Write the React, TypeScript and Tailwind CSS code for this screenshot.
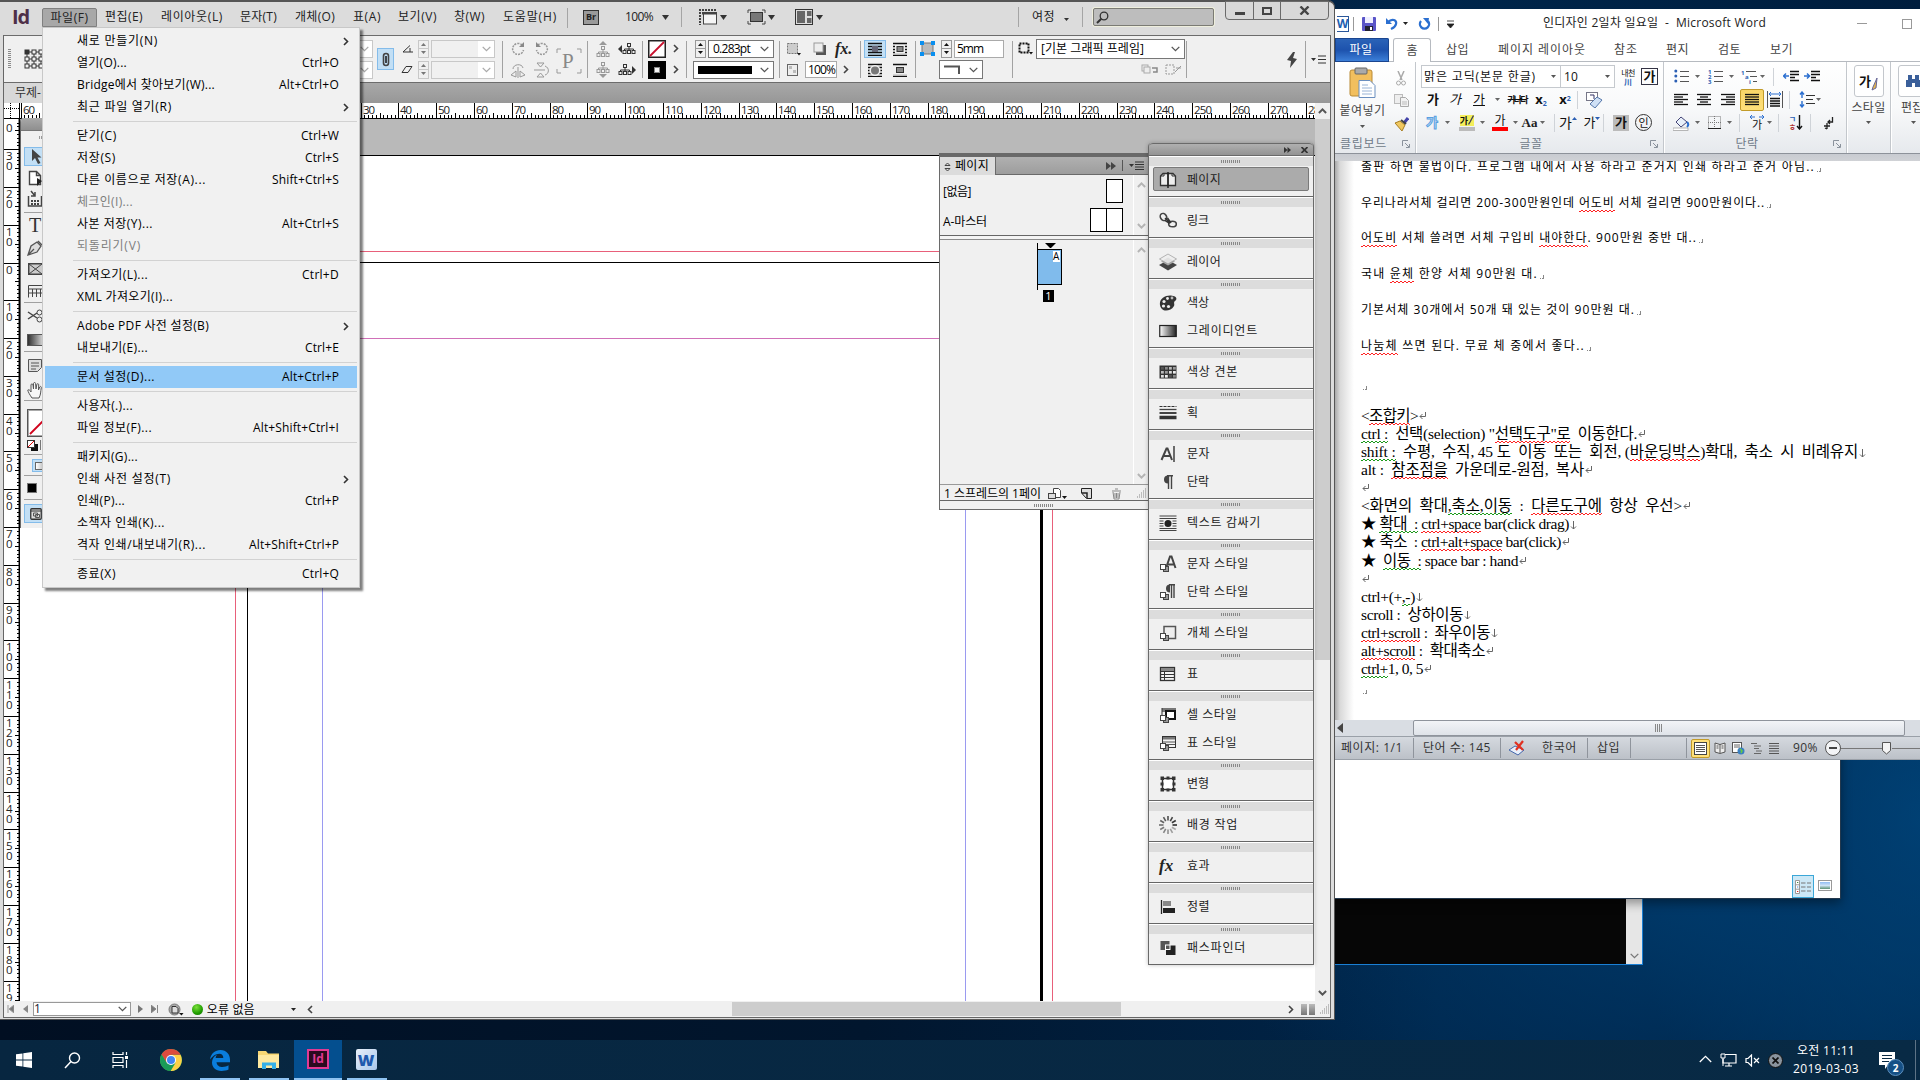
import React, { useLayoutEffect, useRef, useState } from "react";

/* Text whose tracking is adjusted so that it takes exactly `w` pixels. */
function Fit({ w, className = "", children }: { w: number; className?: string; children: React.ReactNode }) {
  const ref = useRef<HTMLSpanElement>(null);
  const [ls, setLs] = useState(0);
  useLayoutEffect(() => {
    const el = ref.current;
    if (!el) return;
    const n = (el.textContent || "").length || 1;
    setLs((w - el.getBoundingClientRect().width) / n);
  }, [w]);
  return (
    <span ref={ref} className={"inline-block shrink-0 whitespace-pre " + className} style={{ letterSpacing: ls }}>
      {children}
    </span>
  );
}

function Svg({ w, h, className = "", children }: { w: number; h: number; className?: string; children: React.ReactNode }) {
  return (
    <svg width={w} height={h} viewBox={`0 0 ${w} ${h}`} fill="none" className={"shrink-0 " + className}>
      {children}
    </svg>
  );
}

/* Centred fixed-size cell of a toolbar. */
function C({ className = "", children }: { className?: string; children?: React.ReactNode }) {
  return <div className={"flex shrink-0 items-center justify-center " + className}>{children}</div>;
}

const Down = ({ c = "#333", className = "" }: { c?: string; className?: string }) => (
  <Svg w={7} h={5} className={className}><path d="M0 0h7L3.500 5z" fill={c} /></Svg>
);
const DownS = ({ c = "#555" }: { c?: string }) => (
  <Svg w={5} h={3}><path d="M0 0h5L2.500 3z" fill={c} /></Svg>
);
const ChevD = ({ c = "#555" }: { c?: string }) => (
  <Svg w={9} h={6}><path d="M.7.9L4.500 4.700L8.300.9" stroke={c} strokeWidth="1.300" /></Svg>
);
const ChevR = ({ c = "#444" }: { c?: string }) => (
  <Svg w={6} h={9}><path d="M1 1l3.500 3.500L1 8" stroke={c} strokeWidth="1.600" /></Svg>
);
const ChevU = ({ c = "#b5b5b5" }: { c?: string }) => (
  <Svg w={9} h={6}><path d="M.9 5L4.500 1.400L8.100 5" stroke={c} strokeWidth="2" /></Svg>
);
const ChevDB = ({ c = "#b5b5b5" }: { c?: string }) => (
  <Svg w={9} h={6}><path d="M.9 1L4.500 4.600L8.100 1" stroke={c} strokeWidth="2" /></Svg>
);

/* ------------------------------------------------------------------ */
/* File menu                                                           */
/* ------------------------------------------------------------------ */
type MI = { t: string; w: number; k?: string; kw?: number; sub?: boolean; off?: boolean; sel?: boolean } | null;
const MENU: MI[] = [
  { t: "새로 만들기(N)", w: 81, sub: true },
  { t: "열기(O)...", w: 50, k: "Ctrl+O", kw: 37 },
  { t: "Bridge에서 찾아보기(W)...", w: 138, k: "Alt+Ctrl+O", kw: 60 },
  { t: "최근 파일 열기(R)", w: 95, sub: true },
  null,
  { t: "닫기(C)", w: 40, k: "Ctrl+W", kw: 38 },
  { t: "저장(S)", w: 39, k: "Ctrl+S", kw: 34 },
  { t: "다른 이름으로 저장(A)...", w: 129, k: "Shift+Ctrl+S", kw: 67 },
  { t: "체크인(I)...", w: 56, off: true },
  { t: "사본 저장(Y)...", w: 76, k: "Alt+Ctrl+S", kw: 57 },
  { t: "되돌리기(V)", w: 64, off: true },
  null,
  { t: "가져오기(L)...", w: 71, k: "Ctrl+D", kw: 37 },
  { t: "XML 가져오기(I)...", w: 96 },
  null,
  { t: "Adobe PDF 사전 설정(B)", w: 132, sub: true },
  { t: "내보내기(E)...", w: 71, k: "Ctrl+E", kw: 34 },
  null,
  { t: "문서 설정(D)...", w: 78, k: "Alt+Ctrl+P", kw: 57, sel: true },
  null,
  { t: "사용자(.)...", w: 56 },
  { t: "파일 정보(F)...", w: 75, k: "Alt+Shift+Ctrl+I", kw: 86 },
  null,
  { t: "패키지(G)...", w: 61 },
  { t: "인쇄 사전 설정(T)", w: 94, sub: true },
  { t: "인쇄(P)...", w: 48, k: "Ctrl+P", kw: 34 },
  { t: "소책자 인쇄(K)...", w: 88 },
  { t: "격자 인쇄/내보내기(R)...", w: 129, k: "Alt+Shift+Ctrl+P", kw: 90 },
  null,
  { t: "종료(X)", w: 39, k: "Ctrl+Q", kw: 37 },
];

function FileMenu() {
  return (
    <div className="absolute left-[42px] top-[27px] z-30 w-[318px] border border-[#c8c8c8] bg-[#f1f1f1] px-[2px] py-[2px] text-[12px] text-black shadow-[3px_3px_2px_rgba(0,0,0,0.5)]">
      {MENU.map((m, i) =>
        m === null ? (
          <div key={i} className="flex h-[7px] items-center pl-[28px]">
            <div className="h-px w-full bg-[#d2d2d2]" />
          </div>
        ) : (
          <div key={i} className={"flex h-[22px] items-center justify-between pl-[32px] leading-[22px] " + (m.sel ? "bg-[#91c9f7]" : "") + (m.off ? " text-[#7d7d7d]" : "")}>
            <Fit w={m.w}>{m.t}</Fit>
            {m.k && <Fit w={m.kw!} className="mr-[18px]">{m.k}</Fit>}
            {m.sub && <span className="mr-[8px]"><ChevR c="#333" /></span>}
          </div>
        )
      )}
    </div>
  );
}

/* ------------------------------------------------------------------ */
/* Application bar                                                     */
/* ------------------------------------------------------------------ */
const Sep = ({ className = "" }: { className?: string }) => <div className={"h-[20px] w-px shrink-0 bg-[#a5a5a5] " + className} />;

function AppBar() {
  return (
    <div className="flex h-[33px] shrink-0 items-start pl-[12px] text-[12px] leading-[18px] text-[#222]">
      <span className="mt-[4px] w-[30px] text-[20px] leading-[22px] font-bold tracking-[-1px] text-[#4e2f48]">Id</span>
      <div className="mt-[6px] flex h-[19px] w-[55px] justify-center rounded-t-[2px] border border-[#808080] bg-[#a8a8a8]">
        <Fit w={38} className="leading-[17px]">파일(F)</Fit>
      </div>
      <div className="mt-[6px] flex w-[471px]">
        <Fit w={38} className="ml-[8px]">편집(E)</Fit>
        <Fit w={62} className="ml-[18px]">레이아웃(L)</Fit>
        <Fit w={37} className="ml-[17px]">문자(T)</Fit>
        <Fit w={40} className="ml-[18px]">개체(O)</Fit>
        <Fit w={28} className="ml-[18px]">표(A)</Fit>
        <Fit w={39} className="ml-[17px]">보기(V)</Fit>
        <Fit w={31} className="ml-[17px]">창(W)</Fit>
        <Fit w={54} className="ml-[18px]">도움말(H)</Fit>
        <Sep className="ml-[10px]" />
      </div>
      <div className="mt-[6px] flex h-[18px] w-[450px] items-center">
        <div className="ml-[15px] flex h-[15px] w-[16px] items-center justify-center border border-[#333] bg-[#9a9a9a] text-[9px] font-bold text-[#222]">Br</div>
        <Fit w={28} className="ml-[26px]">100%</Fit>
        <Down className="ml-[9px]" />
        <Sep className="ml-[12px]" />
        <Svg w={19} h={16} className="ml-[17px]">
          <rect x="4.500" y="4.500" width="13" height="10.500" fill="#f5f5f5" stroke="#444" />
          <path d="M0 1h18M1 0v16" stroke="#444" strokeWidth="2" strokeDasharray="2 1" />
          <rect x="3" y="3" width="15" height="2.500" fill="#444" />
        </Svg>
        <Down className="ml-[2px]" />
        <Svg w={19} h={16} className="ml-[20px]">
          <path d="M1 4V1h3M15 1h3v3M1 12v3h3M15 15h3v-3" stroke="#444" />
          <rect x="3.500" y="3.500" width="12" height="9" fill="#777" stroke="#333" />
        </Svg>
        <Down className="ml-[2px]" />
        <Svg w={19} h={16} className="ml-[20px]">
          <rect x=".5" y=".5" width="17" height="15" fill="#ddd" stroke="#333" />
          <rect x="2" y="2" width="8" height="12" fill="#666" />
          <rect x="12" y="2" width="4.500" height="5" fill="#666" />
          <rect x="12" y="9" width="4.500" height="5" fill="#666" />
        </Svg>
        <Down className="ml-[2px]" />
      </div>
      <div className="mt-[6px] flex h-[18px] items-center">
        <Sep />
        <Fit w={23} className="ml-[13px]">여정</Fit>
        <span className="ml-[9px] mt-[4px]"><DownS c="#333" /></span>
        <Sep className="ml-[13px]" />
        <div className="ml-[10px] flex h-[18px] w-[121px] items-center rounded-[2px] border border-[#7b7b74] bg-[#bdbdbd] pl-[2px] shadow-[0_0_0_1px_#eeeedd]">
          <Svg w={13} h={13}><circle cx="8" cy="5" r="3.800" stroke="#333" strokeWidth="1.300" /><path d="M5.300 7.700L1 12" stroke="#333" strokeWidth="2" /></Svg>
        </div>
      </div>
      <div className="ml-[11px] -mt-[1px] flex h-[19px] w-[104px] rounded-b-[4px] border border-[#6a6a6a] bg-[#d8d8d8]">
        <C className="w-[28px] border-r border-[#6a6a6a]"><div className="mt-[5px] h-[3px] w-[10px] bg-[#444]" /></C>
        <C className="w-[27px] border-r border-[#6a6a6a]"><div className="h-[8px] w-[10px] border-[2px] border-[#444]" /></C>
        <C className="w-[47px]"><Svg w={11} h={9}><path d="M1.500.5l8 8M9.500.5l-8 8" stroke="#444" strokeWidth="2.400" /></Svg></C>
      </div>
    </div>
  );
}

/* ------------------------------------------------------------------ */
/* Control strip                                                       */
/* ------------------------------------------------------------------ */
const Bar = ({ className = "" }: { className?: string }) => <div className={"h-[37px] w-px shrink-0 bg-[#a2a2a2] " + className} />;
function Col({ className = "", children }: { className?: string; children: React.ReactNode }) {
  return <div className={"flex h-[40px] shrink-0 flex-col justify-between " + className}>{children}</div>;
}
function Row({ children, className = "" }: { children: React.ReactNode; className?: string }) {
  return <div className={"flex h-[19px] shrink-0 items-center " + className}>{children}</div>;
}
function Spin({ dim = false }: { dim?: boolean }) {
  return (
    <div className={"flex h-[18px] w-[11px] shrink-0 flex-col border " + (dim ? "border-[#c8c8c8]" : "border-[#999]")}>
      <C className={"h-[8px] border-b " + (dim ? "border-[#c8c8c8]" : "border-[#999]")}><Svg w={5} h={3}><path d="M0 3h5L2.500 0z" fill={dim ? "#777" : "#111"} /></Svg></C>
      <C className="h-[8px]"><DownS c={dim ? "#777" : "#111"} /></C>
    </div>
  );
}
function Dim() {
  return (
    <div className="flex h-[18px] w-[64px] shrink-0 border border-[#c8c8c8] bg-[#f0f0f0]">
      <C className="ml-auto h-full w-[16px] bg-white"><ChevD c="#aaa" /></C>
    </div>
  );
}
const Rot = ({ flip = false }: { flip?: boolean }) => (
  <Svg w={16} h={16} className={flip ? "-scale-x-100" : ""}>
    <path d="M12 4A5.500 5.500 0 1 0 13.500 9" stroke="#999" strokeWidth="1.500" strokeDasharray="2 1" /><path d="M14 1v5H9z" fill="#888" />
  </Svg>
);
const Tree = ({ dir, dim }: { dir: string; dim?: boolean }) => {
  const c = dim ? "#999" : "#333";
  return (
    <Svg w={18} h={16}>
      {dir === "u" && <path d="M9 0l4 4H5z" fill={c} />}
      {dir === "d" && <path d="M9 16l4-4H5z" fill={c} />}
      {dir === "l" && <path d="M0 8l4-4v8z" fill={c} />}
      {dir === "r" && <path d="M18 8l-4-4v8z" fill={c} />}
      <g transform={dir === "u" ? "translate(0 3)" : dir === "d" ? "translate(0 -2)" : dir === "l" ? "translate(2 0)" : "translate(-2 0)"}>
        <rect x="7.500" y="2.500" width="3" height="3" stroke={c} />
        <path d="M9 6v4M4.500 10V8h9v2" stroke={c} />
        <rect x="3" y="9.500" width="3" height="3" stroke={c} /><rect x="7.500" y="9.500" width="3" height="3" stroke={c} /><rect x="12" y="9.500" width="3" height="3" stroke={c} />
      </g>
    </Svg>
  );
};
const Wrap = ({ k }: { k: number }) => (
  <Svg w={16} h={14}>
    <path d="M1 1.500h14M1 4.500h14M1 7.500h14M1 10.500h14M1 13.500h14" stroke="#111" strokeWidth="1.300" />
    {k === 0 && <rect x="5" y="4" width="6" height="6" fill="#667" />}
    {k === 1 && <><rect x="3" y="3" width="10" height="8.500" fill="#f0f0f0" /><rect x="5" y="4.500" width="6" height="5" fill="#888" stroke="#333" /></>}
    {k === 2 && <><circle cx="8" cy="7.500" r="5.500" fill="#f0f0f0" /><circle cx="8" cy="7.500" r="4" fill="#777" /></>}
    {k === 3 && <><rect x="0" y="3" width="16" height="8.500" fill="#f0f0f0" /><rect x="4.500" y="4.500" width="7" height="5" fill="#888" stroke="#333" /></>}
  </Svg>
);

function ControlStrip() {
  return (
    <div className="flex h-[48px] shrink-0 items-start border-y border-[#6c6c6c] bg-[#f0f0f0] pt-[3px] text-[12px] leading-[17px] text-black">
      <div className="ml-[4px] mt-[10px] h-[20px] w-[3px] bg-[repeating-linear-gradient(#8a8a8a_0_1px,transparent_1px_2px)]" />
      <Svg w={20} h={20} className="ml-[13px] mt-[10px]">
        <path d="M3 3h14v14H3zM3 10h14M10 3v14" stroke="#333" />
        {[0, 1, 2].map((r) => [0, 1, 2].map((c) => (
          <rect key={r * 3 + c} x={1 + c * 7} y={1 + r * 7} width="4" height="4" fill={r + c === 0 ? "#333" : "#f0f0f0"} stroke="#333" />
        )))}
      </Svg>
      <Col className="ml-[265px]"><Row><Dim /></Row><Row><Dim /></Row></Col>
      <C className="ml-[4px] mt-[9px] h-[22px] w-[17px] border border-[#84bcea] bg-[#c2dff5]">
        <Svg w={8} h={15}><rect x="1.500" y="1.500" width="5" height="12" rx="2.500" stroke="#444" strokeWidth="1.600" /><path d="M4 4v7" stroke="#111" strokeWidth="1.500" /></Svg>
      </C>
      <Col className="ml-[3px] w-[98px]">
        <Row><C className="w-[20px]"><Svg w={11} h={9}><path d="M1 8L8 1.500M1 8h10M8 4v4" stroke="#333" /></Svg></C><span className="w-[1px]" /><Spin dim /><span className="w-[2px]" /><Dim /></Row>
        <Row><C className="w-[20px]"><Svg w={12} h={9}><path d="M1 7.500L5 1.500h6L7 7.500z" stroke="#333" /></Svg></C><span className="w-[1px]" /><Spin dim /><span className="w-[2px]" /><Dim /></Row>
      </Col>
      <Bar className="ml-[7px] mt-[2px]" />
      <Col className="ml-[5px]">
        <Row><C className="w-[20px]"><Rot /></C><C className="ml-[4px] w-[20px]"><Rot flip /></C></Row>
        <Row>
          <C className="w-[20px]"><Svg w={16} h={16}><path d="M1 13l5-4v6zM15 13l-5-4v6z M8 5v11M3 7C3 2 12 1 13 6" stroke="#999" /></Svg></C>
          <C className="ml-[4px] w-[20px]"><Svg w={16} h={16}><path d="M3 1h7L6.500 5zM3 15h7L6.500 11z M0 8h11M11 4c5 2 4 8 0 9" stroke="#999" /></Svg></C>
        </Row>
      </Col>
      <Svg w={26} h={26} className="ml-[4px] mt-[9px]">
        <path d="M1 5V1h4M21 1h4v4M1 21v4h4M21 25h4v-4" stroke="#999" />
        <text x="6" y="20" fontSize="21" fontFamily="Liberation Serif" fill="#888">P</text>
      </Svg>
      <Bar className="ml-[5px] mt-[2px]" />
      <Col className="ml-[6px]">
        <Row><Tree dir="u" dim /><span className="w-[6px]" /><Tree dir="l" /></Row>
        <Row><Tree dir="d" dim /><span className="w-[6px]" /><Tree dir="r" /></Row>
      </Col>
      <Bar className="ml-[6px] mt-[2px]" />
      <Col className="ml-[5px]">
        <Row><Svg w={18} h={18}><rect x=".75" y=".75" width="16.500" height="16.500" fill="#fff" stroke="#222" strokeWidth="1.500" /><path d="M2 16L16 2" stroke="#c8102e" strokeWidth="1.800" /></Svg><span className="w-[7px]" /><ChevR /></Row>
        <Row><Svg w={18} h={18}><rect width="18" height="18" fill="#000" /><rect x="6.500" y="6.500" width="5" height="5" fill="#f4f4f4" stroke="#888" /></Svg><span className="w-[7px]" /><ChevR /></Row>
      </Col>
      <Bar className="ml-[7px] mt-[2px]" />
      <Col className="ml-[6px] w-[81px]">
        <Row className="justify-end"><Spin /><div className="ml-[2px] flex h-[18px] w-[66px] items-center justify-between border border-[#777] bg-white pl-[4px] pr-[4px]"><Fit w={37}>0.283pt</Fit><ChevD /></div></Row>
        <Row><div className="flex h-[18px] w-[81px] items-center justify-between border border-[#777] bg-white pl-[4px] pr-[4px]"><div className="h-[8px] w-[54px] bg-black" /><ChevD /></div></Row>
      </Col>
      <Bar className="ml-[5px] mt-[2px]" />
      <Col className="ml-[4px] w-[74px]">
        <Row>
          <C className="w-[18px]"><Svg w={15} h={14}><rect x="1.500" y="1.500" width="10" height="10" fill="#ccc" stroke="#777" strokeDasharray="2 1" /><path d="M11 11h4l-2 2.500z" fill="#111" /></Svg></C>
          <C className="ml-[8px] w-[18px]"><Svg w={13} h={13}><rect x="3" y="3" width="10" height="10" fill="#555" /><rect x="1" y="1" width="9" height="9" fill="#eee" stroke="#999" /></Svg></C>
          <span className="ml-[7px] font-['Liberation_Serif'] text-[16px] font-bold italic text-[#222]">fx.</span>
        </Row>
        <Row>
          <C className="w-[16px]"><Svg w={11} h={12}><rect x=".5" y=".5" width="10" height="11" fill="#eee" stroke="#666" /><path d="M2 2h3v3H2zM6 6h3v3H6z" fill="#bbb" /></Svg></C>
          <div className="ml-[5px] flex h-[17px] w-[32px] items-center border border-[#aaa] bg-white pl-[2px]"><Fit w={27}>100%</Fit></div>
          <span className="ml-[6px]"><ChevR /></span>
        </Row>
      </Col>
      <Bar className="ml-[2px] mt-[2px]" />
      <Col className="ml-[3px]">
        <Row><C className="h-[18px] w-[22px] border border-[#84bcea] bg-[#c2dff5]"><Wrap k={0} /></C><C className="ml-[4px] w-[20px]"><Wrap k={1} /></C></Row>
        <Row><C className="w-[22px]"><Wrap k={2} /></C><C className="ml-[4px] w-[20px]"><Wrap k={3} /></C></Row>
      </Col>
      <Bar className="ml-[5px] mt-[2px]" />
      <Col className="ml-[4px] w-[86px]">
        <Row>
          <Svg w={15} h={15}><rect x="2" y="2" width="11" height="11" fill="#bbb" stroke="#777" /><path d="M0 0h4v4H0zM11 0h4v4h-4zM0 11h4v4H0zM11 11h4v4h-4z" fill="#0a8fef" /></Svg>
          <span className="w-[6px]" /><Spin />
          <div className="ml-[2px] flex h-[18px] w-[50px] items-center border border-[#aaa] bg-white pl-[2px]"><Fit w={26}>5mm</Fit></div>
        </Row>
        <Row className="pl-[19px]"><div className="flex h-[19px] w-[44px] items-center justify-between border border-[#777] bg-white px-[4px]"><Svg w={17} h={9}><path d="M0 1.500h15V9" stroke="#555" strokeWidth="2" /></Svg><ChevD /></div></Row>
      </Col>
      <Bar className="ml-[6px] mt-[2px]" />
      <Col className="ml-[5px] w-[167px]">
        <Row>
          <Svg w={15} h={13}><rect x="1.500" y="1.500" width="9" height="9" stroke="#111" strokeWidth="2" strokeDasharray="2 1" /><path d="M11 10h4l-2 2.500z" fill="#111" /></Svg>
          <div className="ml-[3px] flex h-[20px] w-[149px] shrink-0 items-center justify-between border border-[#777] bg-white px-[4px]"><Fit w={103}>[기본 그래픽 프레임]</Fit><ChevD /></div>
        </Row>
        <Row className="justify-end gap-[7px] pr-[3px]">
          <Svg w={17} h={11}><rect x="1" y="1" width="6" height="6" stroke="#aaa" /><rect x="3" y="3" width="6" height="6" fill="#eee" stroke="#aaa" /><path d="M11 4h5v4h-4" stroke="#888" strokeWidth="1.500" /></Svg>
          <Svg w={17} h={11}><rect x="1" y="1" width="8" height="9" stroke="#999" strokeDasharray="2 1" /><path d="M10 8l6-6M11 4h5" stroke="#999" /></Svg>
        </Row>
      </Col>
      <Bar className="ml-[1px] mt-[2px]" />
      <C className="ml-[94px] h-[41px] w-[22px]"><Svg w={12} h={16}><path d="M7 0L1 8l4 1-1 7 7-9-4-1 2-6z" fill="#444" /></Svg></C>
      <Bar className="ml-[2px] mt-[2px]" />
      <C className="ml-[5px] h-[40px] w-[15px]"><Svg w={15} h={9}><path d="M0 3h5L2.500 6zM7 .5h8v1H7zM7 4h8v1H7zM7 7.500h8v1H7z" fill="#333" /></Svg></C>
    </div>
  );
}

/* ------------------------------------------------------------------ */
/* Rulers                                                              */
/* ------------------------------------------------------------------ */
const MM = 3.7795;
function HRuler() {
  const ox = 227.3;
  const ticks: React.ReactNode[] = [];
  for (let m = -60; m <= 286; m++) {
    const x = Math.round(ox + m * MM) + 0.5;
    if (x < 0 || x > 1295) continue;
    ticks.push(<path key={m} d={`M${x} ${m % 10 === 0 ? 0 : m % 5 === 0 ? 10 : 12}V15`} stroke="#000" />);
    if (m % 10 === 0) ticks.push(<text key={"t" + m} x={x + 1.5} y="11" fontSize="11.500" fill="#222" textLength={String(Math.abs(m)).length * 6}>{Math.abs(m)}</text>);
  }
  return <Svg w={1295} h={16}><rect width="1295" height="16" fill="#fff" />{ticks}<path d="M0 15.500h1295" stroke="#000" /></Svg>;
}
function VRuler() {
  const oy = 143.5;
  const ticks: React.ReactNode[] = [];
  for (let m = -37; m <= 196; m++) {
    const y = Math.round(oy + m * MM) + 0.5;
    ticks.push(<path key={m} d={`M${m % 10 === 0 ? 0 : m % 5 === 0 ? 11 : 13} ${y}H16`} stroke="#000" />);
    if (m % 10 === 0)
      String(Math.abs(m)).split("").forEach((d, i) => ticks.push(<text key={"t" + m + i} x="2" y={y + 10.5 + i * 10} fontSize="11.500" fill="#222">{d}</text>));
  }
  return <Svg w={16} h={882}><rect width="16" height="882" fill="#fff" />{ticks}<text x="2" y="13" fontSize="11.500" fill="#222">0</text><path d="M15.300 0v882" stroke="#000" strokeWidth="1.500" /></Svg>;
}

/* ------------------------------------------------------------------ */
/* Tool box                                                            */
/* ------------------------------------------------------------------ */
const TSep = () => <div className="ml-[3px] h-px shrink-0 bg-[#a0a0a0]" />;
function Tool({ className = "", children }: { className?: string; children: React.ReactNode }) {
  return <div className={"ml-[3px] flex w-[30px] shrink-0 items-center pl-[3px] " + className}>{children}</div>;
}
function ToolBox() {
  return (
    <div className="absolute left-[0px] top-[-1px] flex h-[410px] w-[60px] flex-col overflow-hidden rounded-tl-[4px] border-l border-[#666] bg-[#f0f0f0]">
      <div className="h-[13px] shrink-0 border-b border-[#777] bg-gradient-to-b from-[#a9a9a9] to-[#8f8f8f]" />
      <div className="ml-[18px] mt-[5px] h-[3px] w-[20px] shrink-0 bg-[repeating-linear-gradient(90deg,#999_0_1px,transparent_1px_2px)]" />
      <Tool className="mt-[8px] h-[19px] border border-[#84bcea] bg-[#c2dff5] pl-[6px]"><Svg w={12} h={16}><path d="M1 0v12l3-3 3 6 2.500-1L6.500 8.500h4z" fill="#444" /></Svg></Tool>
      <Tool className="h-[23px]"><Svg w={16} h={16}><path d="M2.500 1.500h7l4 4v9h-11zM9.500 1.500v4h4" fill="#fff" stroke="#444" strokeWidth="1.400" /><path d="M10 8v8l5-5z" fill="#222" /></Svg></Tool>
      <Tool className="h-[23px] pb-[4px]"><Svg w={16} h={17}><path d="M1.500 6v10h13V6M4 1l4 5M8 2v4H4" stroke="#444" strokeWidth="1.500" /><path d="M4 11h9M4 14h9" stroke="#444" strokeDasharray="2 1" strokeWidth="2" /></Svg></Tool>
      <TSep />
      <Tool className="h-[25px]"><span className="ml-[2px] font-['Liberation_Serif'] text-[20px] leading-[25px] text-[#333]">T</span></Tool>
      <Tool className="h-[20px]"><Svg w={16} h={16}><path d="M1 15l3-9 6-4 4 4-4 6zM1 15l6-6M11 1l4 4" fill="#ddd" stroke="#555" strokeWidth="1.300" /></Svg></Tool>
      <Tool className="h-[22px] pl-[4px]"><Svg w={15} h={12}><rect x=".75" y=".75" width="14" height="10.500" fill="#ccc" stroke="#444" strokeWidth="1.500" /><path d="M1 1l13 10M14 1L1 11" stroke="#444" /></Svg></Tool>
      <Tool className="h-[22px] pl-[4px]"><Svg w={16} h={13}><path d="M.5.5h15v12M.5.500v12M.5 4h15M.5 8h15M4.500 4v8M8.500 4v8M12.500 4v8" stroke="#444" /></Svg></Tool>
      <TSep />
      <Tool className="h-[26px]"><Svg w={16} h={14}><path d="M1 3l9 6M1 10l9-6" stroke="#444" strokeWidth="1.500" /><circle cx="12.500" cy="3.500" r="2.500" stroke="#444" /><circle cx="12.500" cy="10.500" r="2.500" stroke="#444" /></Svg></Tool>
      <Tool className="h-[22px]"><div className="h-[12px] w-[20px] border border-[#555] bg-gradient-to-r from-[#333] to-white" /></Tool>
      <TSep />
      <Tool className="h-[28px]"><Svg w={16} h={16}><path d="M1.500 1.500h13v8l-4 4h-9zM4 5h8M4 8h8M4 11h5" fill="#ddd" stroke="#555" /></Svg></Tool>
      <Tool className="h-[20px] pl-[2px]"><Svg w={17} h={17}><path d="M5 16C3 13 1 10 .8 8c1-.8 2.200.2 3.200 2V3c0-1.500 1.800-1.500 2 0l.5 4V1.500c.2-1.300 2-1.300 2.100 0L9 7l.8-4.500c.3-1.200 1.900-1 1.900.2L11.500 8l1.200-3c.5-1 1.900-.5 1.600.6C13.500 10 14 12 12 16z" fill="#f7f7f7" stroke="#555" /></Svg></Tool>
      <TSep />
      <div className="ml-[6px] mt-[8px] flex h-[28px] w-[28px] shrink-0 border border-[#555] bg-white shadow-[inset_0_0_0_1px_#aaa]"><Svg w={26} h={26}><path d="M2 24L24 2" stroke="#d0021b" strokeWidth="1.800" /></Svg></div>
      <Tool className="h-[17px]"><Svg w={16} h={12}><rect x="4" y="4" width="7" height="7" fill="#111" /><rect x=".5" y=".5" width="7" height="7" fill="#fff" stroke="#333" /><path d="M1 7l6-6" stroke="#d00" /><path d="M13.500 0v10" stroke="#777" /></Svg></Tool>
      <TSep />
      <div className="ml-[11px] mt-[4px] flex h-[13px] w-[30px] shrink-0 items-center border border-[#84bcea] bg-[#c2dff5] pl-[2px]"><div className="h-[8px] w-[12px] border border-[#666] bg-gradient-to-r from-white to-[#aaa]" /></div>
      <div className="h-[3px] shrink-0" />
      <TSep />
      <Tool className="h-[23px]"><div className="h-[10px] w-[10px] border border-[#777] bg-black" /></Tool>
      <TSep />
      <Tool className="mt-[4px] h-[19px] border border-[#84bcea] bg-[#c2dff5] pl-[5px]"><Svg w={12} h={12}><rect x=".75" y=".75" width="10.500" height="10.500" rx="1" fill="#ddd" stroke="#333" strokeWidth="1.300" /><path d="M1 3h10" stroke="#333" /><path d="M3.500 5h4v3h-4zM5.500 6.500h4v3h-4z" stroke="#555" /></Svg></Tool>
    </div>
  );
}

/* ------------------------------------------------------------------ */
/* Pages panel                                                         */
/* ------------------------------------------------------------------ */
function PagesPanel() {
  return (
    <div className="absolute left-[919px] top-[34px] flex h-[357px] w-[210px] flex-col border-x border-b border-[#6a6a6a] border-t-[4px] border-t-[#696969] bg-[#f0f0f0] text-[12px] leading-[16px] text-black">
      <div className="flex h-[18px] shrink-0 bg-gradient-to-b from-[#b0b0b0] to-[#9c9c9c]">
        <div className="flex w-[56px] items-center border-r border-[#6a6a6a] bg-[#dcdcdc] pl-[4px]">
          <Svg w={7} h={10} className="mt-[2px]"><path d="M1 3.500l2.500-2.500L6 3.500zM1 6.500l2.500 2.500L6 6.500z" stroke="#444" /></Svg>
          <Fit w={34} className="ml-[4px] leading-[18px]">페이지</Fit>
        </div>
        <div className="flex flex-1 items-center justify-end border-b border-[#6a6a6a] pr-[4px]">
          <Svg w={10} h={8}><path d="M0 0l5 4-5 4zM5 0l5 4-5 4z" fill="#444" /></Svg>
          <div className="mx-[6px] h-[11px] w-px bg-[#555]" />
          <Svg w={15} h={9}><path d="M0 3h5L2.500 6zM6 .5h9v1H6zM6 3h9v1H6zM6 5.500h9v1H6zM6 8h9v1H6z" fill="#333" /></Svg>
        </div>
      </div>
      <div className="flex h-[60px] shrink-0">
        <div className="flex flex-1 flex-col">
          <div className="flex h-[31px] items-center justify-between pl-[3px] pr-[10px]"><Fit w={28} className="mt-[3px] leading-[18px]">[없음]</Fit><div className="h-[24px] w-[17px] border border-black bg-white" /></div>
          <div className="flex h-[28px] items-center justify-between pl-[3px] pr-[10px]"><Fit w={44} className="mt-[4px]">A-마스터</Fit><div className="flex h-[24px] w-[33px] border border-black bg-white"><div className="w-[16px] border-r border-black" /></div></div>
        </div>
        <div className="flex w-[15px] flex-col items-center justify-between border-l border-white py-[6px] pt-[7px]"><ChevU /><ChevDB /></div>
      </div>
      <div className="h-[5px] shrink-0 border-b border-t border-[#8a8a8a] border-t-[#666] bg-[#f4f4f4]" />
      <div className="flex h-[244px] shrink-0">
        <div className="flex flex-1 flex-col items-start pl-[97px] pt-[3px]">
          <div className="flex flex-col border-l border-black">
            <div className="flex h-[6px] w-[25px] justify-center"><Svg w={11} h={5}><path d="M0 0h11L6 5H5z" fill="#000" /></Svg></div>
            <div className="flex h-[36px] w-[24px] justify-end border border-l-0 border-black bg-[#80bbec]"><span className="mt-[1px] mr-[1px] h-[11px] w-[7px] bg-white text-[10px] leading-[11px]">A</span></div>
            <div className="h-[5px]" />
          </div>
          <div className="ml-[6px] flex h-[12px] w-[11px] items-center justify-center bg-black text-[11px] leading-[12px] text-white">1</div>
        </div>
        <div className="flex w-[15px] flex-col items-center justify-between border-l border-white pb-[5px] pt-[7px]"><ChevU /><ChevDB /></div>
      </div>
      <div className="flex h-[16px] shrink-0 items-center border-t border-[#999] pl-[4px]">
        <Fit w={97} className="mt-[2px] leading-[15px]">1 스프레드의 1페이</Fit>
        <Svg w={20} h={12} className="ml-[7px] mt-[2px]"><path d="M5.500.5h5l2 2v7h-7z" fill="#fff" stroke="#444" /><rect x=".5" y="5.500" width="7" height="5" fill="#ddd" stroke="#444" /><path d="M14 8h5l-2.500 3z" fill="#111" /></Svg>
        <Svg w={11} h={11} className="ml-[13px] mt-[2px]"><path d="M.5.5h10v10h-5L.5 5z" fill="#ddd" stroke="#222" /><path d="M1 5h5v5" stroke="#222" strokeWidth="1.500" /></Svg>
        <Svg w={11} h={12} className="ml-[19px] mt-[2px]"><path d="M1 3h9M4 1h3M2 4l1 7h5l1-7M4 5v5M5.500 5v5M7 5v5" stroke="#888" /></Svg>
        <Svg w={11} h={11} className="ml-[14px] mt-[2px]"><path d="M9 1h1M7 3h3M5 5h5M3 7h7M1 9h9" stroke="#888" strokeDasharray="1 1" /></Svg>
      </div>
      <C className="h-[9px] border-t border-[#666]"><div className="h-[3px] w-[20px] bg-[repeating-linear-gradient(90deg,#888_0_1px,transparent_1px_2px)]" /></C>
    </div>
  );
}

/* ------------------------------------------------------------------ */
/* Collapsed panel dock                                                */
/* ------------------------------------------------------------------ */
const badge = <><rect x="4.500" y="11.500" width="5" height="5" fill="#999" stroke="#444" /><rect x="1.500" y="9.500" width="5" height="5" fill="#fff" stroke="#444" /></>;
const ICONS: Record<string, React.ReactNode> = {
  pages: <><path d="M1.500 5L4 2.500h5v12H1.500zM9 2.500h5L16.500 5v9.500H9z" fill="#eee" stroke="#333" strokeWidth="1.300" /><path d="M9 1v16" stroke="#222" strokeWidth="1.500" /><path d="M2 5h3V3M16 5h-3V3" stroke="#333" /></>,
  link: <><ellipse cx="4.500" cy="5" rx="3" ry="3.800" transform="rotate(-35 4.500 5)" stroke="#444" strokeWidth="1.600" /><ellipse cx="13.500" cy="12" rx="3.800" ry="2.800" stroke="#444" strokeWidth="1.600" /><path d="M6 6l5 5M8.500 6l3.500 5M6 8.500l4.500 3" stroke="#333" strokeWidth="1.400" /></>,
  layers: <><path d="M9 7l9 5-9 5.500L0 12z" fill="#444" /><path d="M9 4.500l7 4-7 4-7-4z" fill="#aaa" /><path d="M9 1l8.500 5L9 11 .5 6z" fill="#eee" fillOpacity=".8" stroke="#999" strokeWidth=".7" /></>,
  color: <><path d="M1 11C0 5 6 1 12 1.500c5 .5 7 3 4 5.500-2 1.600 0 3-1 5-2 3.500-5 4.500-8 4.500s-5.500-2-6-5.500z" fill="#333" /><circle cx="5" cy="7.500" r="1.600" fill="#eee" /><circle cx="8.500" cy="4.500" r="1.400" fill="#eee" /><circle cx="13" cy="4" r="1.400" fill="#bbb" /><circle cx="4.500" cy="12" r="1.600" fill="#eee" /><circle cx="9.500" cy="12.500" r="1.600" fill="#eee" /></>,
  grad: <rect x=".75" y="3.500" width="16.500" height="11" fill="url(#gr)" stroke="#222" strokeWidth="1.200" />,
  swatch: <><rect x=".5" y="2.500" width="17" height="13" fill="#333" />{[0, 1, 2, 3].map((c) => [0, 1, 2].map((r) => <rect key={c * 3 + r} x={2 + c * 4} y={4 + r * 4} width="2.800" height="2.600" fill={["#555", "#888", "#bbb", "#999", "#ddd", "#eee"][(c + r * 2) % 6]} />))}</>,
  stroke: <><path d="M.5 2.500h17" stroke="#333" strokeDasharray="3 1" /><path d="M.5 5.500h17" stroke="#444" strokeWidth="1.300" /><path d="M.5 9h17" stroke="#444" strokeWidth="2" /><path d="M.5 13.500h17" stroke="#333" strokeWidth="3.500" /></>,
  char: <><path d="M2.500 15L7.500 3.500h1L13 15M4.500 11h7" stroke="#444" strokeWidth="2" /><path d="M15 1v16" stroke="#222" strokeWidth="1.300" /></>,
  para: <><path d="M9 2.500a4 4 0 0 0 0 8z" fill="#444" /><path d="M8 2.700h6M9.500 3v13M12.500 3v13" stroke="#444" strokeWidth="1.400" /></>,
  wrap: <><path d="M.5 2h17M.5 4.500h17M.5 7h4M.5 9.500h4M.5 12h4M13.500 7h4M13.500 9.500h4M13.500 12h4M.5 14.500h17M.5 16.500h17" stroke="#444" /><circle cx="9" cy="9.500" r="3.500" fill="#222" /></>,
  cstyle: <><path d="M7 13L11 1.500h1.500L16.500 13M9 9.500h6.500" stroke="#444" strokeWidth="2" />{badge}</>,
  pstyle: <><path d="M11 1.500a4 4 0 0 0 0 8z" fill="#444" /><path d="M10 1.700h6M12.500 2v13M15 2v13" stroke="#444" strokeWidth="1.400" />{badge}</>,
  ostyle: <><rect x="5" y="2.500" width="11.500" height="12" fill="#eee" stroke="#555" strokeWidth="1.500" />{badge}</>,
  table: <><rect x="1.500" y="2.500" width="14" height="13" fill="#f4f4f4" stroke="#333" strokeWidth="1.300" /><rect x="2" y="3" width="13" height="3" fill="#888" /><path d="M2 6.500h13M2 9.500h13M2 12.500h13M5.500 6v9" stroke="#333" /></>,
  cell: <><rect x="3" y="2" width="14" height="4" fill="#777" /><rect x="7" y="5" width="9" height="8" fill="#fff" stroke="#111" strokeWidth="2" /><path d="M3 2v8" stroke="#333" />{badge}</>,
  tstyle: <><rect x="3.500" y="2.500" width="13" height="11" fill="#f4f4f4" stroke="#333" /><rect x="4" y="3" width="12" height="2.500" fill="#777" /><path d="M4 8h12M4 10.500h12" stroke="#555" />{badge}</>,
  trans: <><rect x="3.500" y="3.500" width="11" height="11" fill="#fff" stroke="#333" strokeWidth="1.500" /><path d="M1.500 1.500h3.500v3.500H1.500zM7.500 1.500h3v3h-3zM13 1.500h3.500v3.500H13zM1.500 7.500h3v3h-3zM13.500 7.500h3v3h-3zM1.500 13H5v3.500H1.500zM7.500 13.500h3v3h-3zM13 13h3.500v3.500H13z" fill="#333" /></>,
  bg: <>{Array.from({ length: 12 }, (_, i) => <path key={i} d="M9 0v4.500" transform={`rotate(${i * 30} 9 9)`} stroke="#222" strokeOpacity={0.35 + ((i + 8) % 12) * 0.055} strokeWidth="1.600" />)}</>,
  align: <><path d="M2.500 2v14" stroke="#222" strokeWidth="1.300" /><rect x="4" y="3" width="8" height="5" fill="#888" /><rect x="4" y="10" width="12" height="5" fill="#222" /></>,
  path: <><rect x="1.500" y="2" width="9" height="9" fill="#555" /><rect x="7" y="6.500" width="9.500" height="9.500" fill="#222" /><rect x="6.500" y="6" width="4.500" height="4.500" fill="#555" stroke="#fff" /></>,
};
const DOCK: [string, string, number][][] = [
  [["pages", "페이지", 34]],
  [["link", "링크", 22]],
  [["layers", "레이어", 34]],
  [["color", "색상", 22], ["grad", "그레이디언트", 71]],
  [["swatch", "색상 견본", 51]],
  [["stroke", "획", 11]],
  [["char", "문자", 23], ["para", "단락", 22]],
  [["wrap", "텍스트 감싸기", 74]],
  [["cstyle", "문자 스타일", 62], ["pstyle", "단락 스타일", 62]],
  [["ostyle", "개체 스타일", 62]],
  [["table", "표", 11]],
  [["cell", "셀 스타일", 50], ["tstyle", "표 스타일", 50]],
  [["trans", "변형", 22]],
  [["bg", "배경 작업", 51]],
  [["fx", "효과", 23]],
  [["align", "정렬", 23]],
  [["path", "패스파인더", 59]],
];
function Dock() {
  return (
    <div className="absolute left-[1128px] top-[24px] w-[166px] rounded-t-[4px] border-x border-[#6a6a6a] bg-[#f0f0f0] text-[12px] text-[#222] shadow-[0_0_4px_rgba(0,0,0,0.25)]">
      <div className="flex h-[13px] items-center justify-end gap-[10px] rounded-t-[4px] border-b border-t border-[#6a6a6a] bg-gradient-to-b from-[#b0b0b0] to-[#939393] pr-[5px]">
        <Svg w={7} h={6}><path d="M0 0l3.500 3L0 6zM3.500 0L7 3 3.500 6z" fill="#333" /></Svg>
        <Svg w={7} h={6}><path d="M.5 0l6 6M6.500 0l-6 6" stroke="#333" strokeWidth="1.700" /></Svg>
      </div>
      {DOCK.map((g, i) => (
        <div key={i} className="border-b border-[#666] pb-[2px]">
          <C className="h-[10px] border-t border-white bg-[#dcdcdc]"><div className="h-[3px] w-[20px] bg-[repeating-linear-gradient(90deg,#888_0_1px,transparent_1px_2px)]" /></C>
          {g.map(([ic, t, w]) => (
            <div key={t} className="flex h-[28px] items-start px-[4px] pt-[1px]">
              <div className={"flex h-[24px] w-full items-center pt-[1px] " + (i === 0 ? "rounded-[2px] border border-[#7a7a7a] bg-[#ababab] pl-[5px]" : "pl-[6px]")}>
                {ic === "fx" ? (
                  <span className="w-[18px] font-['Liberation_Serif'] text-[17px] leading-[20px] font-bold italic">fx</span>
                ) : (
                  <Svg w={18} h={18}>
                    <defs><linearGradient id="gr"><stop stopColor="#fff" /><stop offset="1" stopColor="#222" /></linearGradient></defs>
                    {ICONS[ic]}
                  </Svg>
                )}
                <Fit w={w} className="ml-[10px] mt-px">{t}</Fit>
              </div>
            </div>
          ))}
        </div>
      ))}
    </div>
  );
}

/* ------------------------------------------------------------------ */
/* InDesign window                                                     */
/* ------------------------------------------------------------------ */
function InDesign() {
  return (
    <div className="absolute left-0 top-0 z-20 h-[1020px] w-[1335px]">
      <div className="flex h-[1020px] w-[1335px] flex-col rounded-tr-[7px] border-b border-r border-t-2 border-[#555] bg-[#dcdcdc]">
        <AppBar />
        <div className="mx-[3px] flex flex-1 flex-col border-x border-b border-[#666]">
          <ControlStrip />
          <div className="flex h-[20px] shrink-0 items-center bg-gradient-to-b from-[#a8a8a8] to-[#979797] text-[12px] text-[#333]">
            <div className="flex h-[20px] w-[120px] items-center bg-[#d8d8d8] pl-[11px]">무제-1</div>
          </div>
          <div className="flex h-[16px] shrink-0">
            <Svg w={16} h={16}><rect width="16" height="16" fill="#fff" /><path d="M6.500 0v16M0 5.500h16" stroke="#000" strokeDasharray="1 1" /><path d="M15.500 0v16M0 15.500h16" stroke="#000" /></Svg>
            <HRuler />
            <C className="w-[15px] bg-[#f0f0f0]"><ChevU c="#555" /></C>
          </div>
          <div className="flex h-[882px] shrink-0">
            <VRuler />
            {/* pasteboard: guides and floating panels sit at free canvas positions */}
            <div className="relative h-[882px] w-[1295px] bg-white">
              <div className="h-[37px] border-b border-black bg-[#b9b9b9]" />
              <div className="absolute left-[215px] top-[132px] h-[750px] w-[818px] border-l border-r border-t border-[#e8607a]" />
              <div className="absolute left-[227px] top-[143px] h-[739px] w-[796px] border-l border-r-[3px] border-t border-black" />
              <div className="absolute left-[302px] top-[219px] h-[663px] w-[644px] border-l border-r border-t border-[#9a9af0] border-t-[#d070b8]" />
              <ToolBox />
              <PagesPanel />
              <Dock />
            </div>
            <div className="w-[15px] bg-[#efefef]">
              <div className="h-[541px] bg-[#cdcdcd]" />
              <C className="mt-[327px] h-[12px]"><ChevDB c="#555" /></C>
            </div>
          </div>
          <div className="flex flex-1 items-center bg-[#f0f0f0] text-[12px] leading-[14px] text-black">
            <Svg w={7} h={8} className="ml-[3px]"><path d="M1 0v8M7 0v8L2 4z" stroke="#999" fill="#777" /></Svg>
            <Svg w={5} h={8} className="ml-[9px]"><path d="M5 0v8L0 4z" fill="#888" /></Svg>
            <div className="ml-[5px] flex h-[14px] w-[98px] items-center justify-between border border-[#999] bg-white pr-[3px]"><span className="leading-[12px] text-[#223]">1</span><ChevD c="#555" /></div>
            <Svg w={5} h={8} className="ml-[7px]"><path d="M0 0v8l5-4z" fill="#777" /></Svg>
            <Svg w={7} h={8} className="ml-[8px]"><path d="M6.500 0v8M0 0v8l5-4z" stroke="#888" fill="#777" /></Svg>
            <Svg w={16} h={13} className="ml-[10px]"><circle cx="6.500" cy="6.500" r="5.500" fill="#aaa" stroke="#777" /><path d="M4 3.500h4l2 2V10H4z" fill="#ddd" stroke="#333" /><path d="M11 10h4.500l-2 2.500z" fill="#111" /></Svg>
            <div className="ml-[8px] h-[11px] w-[11px] rounded-full bg-[radial-gradient(circle_at_40%_30%,#7be03a,#1f9c00_60%,#0f6c00)]" />
            <Fit w={48} className="ml-[4px] mt-[2px]">오류 없음</Fit>
            <span className="ml-[36px]"><DownS c="#222" /></span>
            <span className="ml-[11px] -scale-x-100"><ChevR /></span>
            <div className="ml-[419px] h-[14px] w-[390px] bg-[#cdcdcd]" />
            <span className="ml-[167px]"><ChevR /></span>
            <div className="ml-[7px] flex gap-[2px]"><div className="h-[11px] w-[6px] bg-gradient-to-b from-[#bbb] to-[#777]" /><div className="h-[11px] w-[6px] bg-gradient-to-b from-[#bbb] to-[#777]" /></div>
            <Svg w={10} h={10} className="ml-[5px]"><path d="M8 1h1M6 3h3M4 5h5M2 7h7M0 9h9" stroke="#888" strokeDasharray="1 1" /></Svg>
          </div>
        </div>
        <div className="h-[4px] shrink-0" />
      </div>
      <FileMenu />
    </div>
  );
}

/* ------------------------------------------------------------------ */
/* Word                                                                */
/* ------------------------------------------------------------------ */
/* Spelling (red) and grammar (green) squiggles: two offset rows of 2px dashes. */
const R = ({ children }: { children: React.ReactNode }) => (
  <span className="bg-[linear-gradient(90deg,#f22_50%,transparent_50%),linear-gradient(90deg,transparent_50%,#f22_50%)] bg-[length:4px_1px,4px_1px] bg-[position:0_100%,0_calc(100%-1px)] bg-repeat-x pb-[1px]">{children}</span>
);
const G = ({ children }: { children: React.ReactNode }) => (
  <span className="bg-[linear-gradient(90deg,#1a9a1a_50%,transparent_50%),linear-gradient(90deg,transparent_50%,#1a9a1a_50%)] bg-[length:4px_1px,4px_1px] bg-[position:0_100%,0_calc(100%-1px)] bg-repeat-x pb-[1px]">{children}</span>
);
const EndA = () => <Svg w={7} h={8} className="ml-[1px] mt-[4px]"><path d="M1 6.500h1M4.500 3v4M3 6.500h1" stroke="#888" /></Svg>;
const EndP = () => <Svg w={8} h={8} className="ml-[1px]"><path d="M6.500 0v4.500H1M3.500 2l-2.500 2.500 2.500 2.500" stroke="#666" /></Svg>;
const EndL = () => <Svg w={7} h={9} className="ml-[1px] mt-[2px]"><path d="M3.500 0v8M1 5.500L3.500 8 6 5.500" stroke="#666" /></Svg>;

const A_LINES: [number, React.ReactNode][] = [
  [454, "출판 하면 불법이다. 프로그램 내에서 사용 하라고 준거지 인쇄 하라고 준거 아님.."],
  [404, <>우리나라서체 걸리면 200-300만원인데 <R>어도비</R> 서체 걸리면 900만원이다..</>],
  [336, <><R>어도비</R> 서체 쓸려면 서체 구입비 <R>내야한다</R>. 900만원 중반 대..</>],
  [177, <>국내 <R>윤체</R> 한양 서체 90만원 대.</>],
  [274, <>기본서체 30개에서 50개 돼 있는 것이 90만원 대.</>],
  [224, <><R>나눔체</R> 쓰면 된다. 무료 체 중에서 좋다..</>],
];
const B_LINES: [number, React.ReactNode, string][] = [
  [57, <>&lt;<R>조합키</R>&gt;</>, "p"],
  [276, <><G>ctrl :</G>{"  "}선택(selection) "<R>선택도구"로</R>{"  "}이동한다.</>, "p"],
  [497, <><G>shift :</G>{"  "}수평,{"  "}수직, 45 도{"  "}이동{"  "}또는{"  "}회전, (<R>바운딩박스</R>)확대,{"  "}축소{"  "}시{"  "}비례유지</>, "l"],
  [223, <>alt :{"  "}<R>참조점을</R>{"  "}가운데로-원점,{"  "}복사</>, "p"],
  [0, "", "p"],
  [321, <>&lt;화면의{"  "}확대<G>,축소,이동</G>{"  "}:{"  "}<R>다른도구에</R>{"  "}항상{"  "}우선&gt;</>, "p"],
  [208, <>★ <G>확대{"  "}:</G> <R>ctrl+space</R> bar(click drag)</>, "l"],
  [200, <>★ 축소{"  "}: <R>ctrl+alt+space</R> bar(click)</>, "p"],
  [157, <>★ {" "}<G>이동{"  "}:</G> space bar : hand</>, "p"],
  [0, "", "p"],
  [54, <>ctrl+(+<G>,-</G>)</>, "l"],
  [102, <>scroll :{"  "}상하이동</>, "l"],
  [129, <><R>ctrl+scroll</R> :{"  "}좌우이동</>, "l"],
  [124, <><R>alt+scroll</R> :{"  "}확대축소</>, "p"],
  [62, <><G>ctrl+</G>1, 0, 5</>, "p"],
];

const Lines = ({ xs }: { xs: [number, number][] }) => (
  <Svg w={14} h={13}>{xs.map(([a, b], i) => <path key={i} d={`M${a} ${1.5 + i * 2.5}H${b}`} stroke="#111" strokeWidth="1.300" />)}</Svg>
);
const VS = () => <div className="h-[18px] w-px shrink-0 bg-[#cfd3d8]" />;
const ArrowCell = ({ className = "" }: { className?: string }) => <C className={className}><DownS c="#666" /></C>;
const Ko = ({ className = "", children }: { className?: string; children: React.ReactNode }) => <span className={"text-[13px] leading-[15px] text-[#111] " + className}>{children}</span>;
function GroupLabel({ t, w, left = false }: { t: string; w: number; left?: boolean }) {
  return (
    <div className="mt-auto flex h-[19px] items-center text-[12px] text-[#6f7a88]">
      <span className={"flex flex-1 " + (left ? "pl-[5px]" : "justify-center pr-[9px]")}><Fit w={w} className="leading-[18px]">{t}</Fit></span>
      <Svg w={8} h={8} className="mr-[5px]"><path d="M.5 6V.5H6M3 3l4 4M7.500 4v3.500H4" stroke="#8a929c" /></Svg>
    </div>
  );
}

const Bul = ({ n }: { n: boolean }) => (
  <Svg w={15} h={15}>
    {[2, 7, 12].map((y, i) => <g key={y}>{n ? <text x="0" y={y + 2.5} fontSize="6" fontWeight="700" fill="#2b5fb4">{i + 1}</text> : <circle cx="1.800" cy={y} r="1.500" fill="#2b5fb4" />}<path d={`M6 ${y + 0.5}h9`} stroke="#555" /></g>)}
  </Svg>
);
const Indent = ({ r }: { r: boolean }) => (
  <Svg w={16} h={13}><path d="M7 1.500h9M7 4.500h9M7 7.500h5M7 10.500h9" stroke="#111" strokeWidth="1.600" /><path d={r ? "M0 6h5M3 3.500L5.500 6 3 8.500" : "M1 6h5M3 3.500L.5 6 3 8.500"} stroke="#2b6fd0" strokeWidth="1.500" /></Svg>
);

function WordTitle() {
  return (
    <div className="flex h-[29px] shrink-0 items-center bg-white">
      <C className="ml-[2px] h-[16px] w-[12px] border border-l-0 border-[#2b579a] text-[12px] font-bold text-[#1f5fb0]">W</C>
      <C className="w-[9px]"><div className="h-[14px] w-px bg-[#999]" /></C>
      <Svg w={14} h={14} className="ml-[4px]"><rect width="14" height="14" rx="1" fill="#5a55c8" /><rect x="3" y="0" width="8" height="6" fill="#eef" /><rect x="3" y="9" width="8" height="5" fill="#223" /><rect x="8" y="10" width="2" height="3" fill="#fff" /></Svg>
      <Svg w={13} h={14} className="ml-[9px]"><path d="M1 1v6h6z" fill="#2b6fd0" /><path d="M3 5c4-4 9-2 8 2-.5 3-3 4-5 5" stroke="#2b6fd0" strokeWidth="2.200" /></Svg>
      <C className="w-[15px]"><DownS c="#222" /></C>
      <Svg w={13} h={14} className="ml-[5px]"><path d="M3 4a4.600 4.600 0 1 0 7 0" stroke="#2b6fd0" strokeWidth="2.300" /><path d="M5 1h6l-1 6z" fill="#2b6fd0" /></Svg>
      <C className="w-[15px]"><div className="h-[14px] w-px bg-[#999]" /></C>
      <Svg w={7} h={8} className="ml-px"><path d="M0 1h7M0 4h7L3.500 8z" stroke="#222" fill="#222" strokeWidth=".8" /></Svg>
      <Fit w={223} className="ml-[89px] -mt-[2px] text-[12px] text-[#222]">인디자인 2일차 일요일  -  Microsoft Word</Fit>
      <div className="ml-[91px] h-px w-[10px] bg-[#999]" />
      <div className="ml-[35px] h-[10px] w-[10px] border border-[#999]" />
    </div>
  );
}

function WordTabs() {
  return (
    <div className="flex h-[24px] shrink-0 items-end bg-white text-[12px] leading-[22px] text-[#444]">
      <C className="h-[24px] w-[54px] rounded-tr-[2px] bg-gradient-to-b from-[#2c64b8] via-[#1d52ad] to-[#3f83dc] text-white shadow-[inset_0_0_0_1px_#1a458f]"><Fit w={23} className="mr-[2px]">파일</Fit></C>
      <div className="h-full w-[4px] border-b border-[#b6bac0]" />
      <C className="h-[24px] w-[38px] rounded-t-[3px] border border-b-0 border-[#b6bac0] bg-white"><Fit w={11}>홈</Fit></C>
      <div className="flex h-full flex-1 items-center border-b border-[#b6bac0]">
        <Fit w={23} className="ml-[15px]">삽입</Fit>
        <Fit w={88} className="ml-[29px]">페이지 레이아웃</Fit>
        <Fit w={24} className="ml-[28px]">참조</Fit>
        <Fit w={23} className="ml-[28px]">편지</Fit>
        <Fit w={23} className="ml-[29px]">검토</Fit>
        <Fit w={23} className="ml-[29px]">보기</Fit>
      </div>
    </div>
  );
}

const grp = "flex h-full shrink-0 flex-col border-r border-[#c3c7cc] shadow-[1px_0_0_#fff]";
const row = "flex h-[23px] shrink-0 items-center";

function Ribbon() {
  return (
    <div className="flex h-[92px] shrink-0 overflow-hidden border-b border-[#8d929a] bg-gradient-to-b from-white via-[#f8f9fa] to-[#e6e9ed] text-[#444]">
      <div className={grp + " w-[81px]"}>
        <div className="flex h-[72px] pt-[5px]">
          <div className="flex w-[55px] flex-col items-center">
            <Svg w={27} h={31}><rect x="1" y="3" width="22" height="26" rx="2" fill="#f2bf5e" stroke="#b98a35" /><rect x="6" y="1" width="12" height="6" rx="1" fill="#aaa" stroke="#666" /><path d="M10 13.500h11l5 5v12H10z" fill="#fff" stroke="#6b8fbf" /><path d="M13 18h6M13 21h10M13 24h10M13 27h10" stroke="#9ab4d6" /></Svg>
            <Fit w={46} className="mt-[4px] text-[12px] leading-[17px]">붙여넣기</Fit>
            <span className="mt-[6px]"><DownS /></span>
          </div>
          <div className="flex flex-1 flex-col items-center pr-[3px]">
            <C className="h-[22px]"><Svg w={10} h={15}><path d="M2 0l4 9M8 0L4 9" stroke="#aaa" strokeWidth="1.500" /><circle cx="2.500" cy="12" r="2" stroke="#aaa" /><circle cx="7.500" cy="12" r="2" stroke="#aaa" /></Svg></C>
            <C className="h-[23px]"><Svg w={15} h={13}><rect x=".5" y=".5" width="8" height="9" fill="#eee" stroke="#bbb" /><path d="M6.500 3.500h5l3 3v6h-8z" fill="#f2f2f2" stroke="#aaa" /><path d="M8 8h5M8 10h5" stroke="#bbb" /></Svg></C>
            <C className="h-[23px]"><Svg w={15} h={14}><path d="M14 1l-4 5" stroke="#44a" strokeWidth="3" /><path d="M1 6l5-2 5 4-3 6z" fill="#f0c860" stroke="#a67c20" /><path d="M7 3l5 4" stroke="#444" strokeWidth="2" /></Svg></C>
          </div>
        </div>
        <GroupLabel t="클립보드" w={47} left />
      </div>

      <div className={grp + " w-[248px] pl-[5px]"}>
        <div className="mt-[3px] flex h-[24px] items-center text-[12px] text-[#111]">
          <div className="flex h-[23px] w-[140px] items-center border border-[#c5c9ce] bg-white pl-[2px]"><Fit w={112}>맑은 고딕(본문 한글)</Fit><C className="ml-auto w-[14px]"><DownS /></C></div>
          <div className="-ml-px flex h-[23px] w-[55px] items-center border border-[#c5c9ce] bg-white pl-[3px]"><Fit w={14}>10</Fit><C className="ml-auto w-[14px]"><DownS /></C></div>
          <div className="ml-[5px] flex w-[16px] flex-col items-center text-[8px] leading-[9px]"><span className="tracking-[-0.5px] text-[#111]">내천</span><span className="font-bold text-[#2b5fb4]">川</span></div>
          <C className="ml-[5px] h-[17px] w-[17px] border border-[#334]"><Ko className="font-bold">가</Ko></C>
        </div>
        <div className={row}>
          <C className="w-[24px]"><Ko className="font-bold">가</Ko></C><C className="w-[20px]"><Ko className="italic">가</Ko></C><C className="w-[28px]"><Ko className="underline">가</Ko></C><ArrowCell className="w-[8px]" />
          <C className="ml-[4px] w-[24px]"><span className="text-[9px] font-bold tracking-[-2px] text-[#111] line-through">가나다</span></C>
          <C className="w-[24px]"><span className="text-[13px] font-bold text-[#111]">x<sub className="text-[7px] text-[#2b5fb4]">2</sub></span></C>
          <C className="w-[24px]"><span className="text-[13px] font-bold text-[#111]">x<sup className="text-[7px] text-[#2b5fb4]">2</sup></span></C>
          <VS />
          <C className="ml-[7px] w-[18px]"><Svg w={17} h={16}><rect x=".5" y=".5" width="11" height="8" fill="#fff" stroke="#778" /><path d="M4 3h4v4" stroke="#336" /><path d="M4 12l7-7 5 3-7 8z" fill="#cfe0f5" stroke="#57a" /></Svg></C>
        </div>
        <div className={row}>
          <C className="w-[22px]"><Ko className="font-bold text-[#cfe6fb] [-webkit-text-stroke:1px_#5aa0e0]">가</Ko></C><ArrowCell className="w-[8px]" />
          <C className="ml-[6px] w-[20px] flex-col"><span className="flex items-center bg-[#f3ee5a] text-[9px] leading-[11px] font-bold text-[#111]">가<Svg w={6} h={10}><path d="M5.500.5L2 7 .5 9.500" stroke="#445" strokeWidth="1.400" /></Svg></span><span className="mt-[1px] h-[4px] w-[16px] bg-[#bbb]" /></C><ArrowCell className="w-[10px]" />
          <C className="ml-[3px] w-[20px] flex-col"><span className="text-[12px] leading-[12px] text-[#111]">가</span><span className="h-[4px] w-[16px] bg-[#f00]" /></C><ArrowCell className="w-[10px]" />
          <C className="w-[19px]"><span className="font-['Liberation_Serif'] text-[13px] font-bold text-[#222]">Aa</span></C><ArrowCell className="w-[6px]" />
          <span className="w-[9px]" /><VS />
          <C className="w-[26px]"><Ko className="text-[14px]">가</Ko><Svg w={5} h={14}><path d="M0 4l2.500-3L5 4z" fill="#2b5fb4" /></Svg></C>
          <C className="w-[22px]"><Ko className="text-[11px]">가</Ko><Svg w={5} h={14}><path d="M0 1l2.500 3L5 1z" fill="#2b5fb4" /></Svg></C>
          <VS />
          <C className="ml-[9px] h-[16px] w-[16px] bg-[#bbb]"><Ko className="font-bold">가</Ko></C>
          <C className="ml-[6px] h-[17px] w-[17px] rounded-full border border-[#333]"><span className="text-[11px] leading-[12px] text-[#111]">인</span></C>
        </div>
        <GroupLabel t="글꼴" w={23} />
      </div>

      <div className={grp + " w-[183px] pl-[6px]"}>
        <div className={row + " mt-[3px]"}>
          <C className="w-[22px]"><Bul n={false} /></C><ArrowCell className="w-[10px]" /><C className="ml-[2px] w-[22px]"><Bul n /></C><ArrowCell className="w-[10px]" />
          <C className="ml-[3px] w-[20px]"><Svg w={16} h={15}><text x="0" y="6" fontSize="6" fontWeight="700" fill="#2b5fb4">1</text><text x="4" y="10" fontSize="6" fontWeight="700" fill="#2b5fb4">a</text><text x="8" y="15" fontSize="6" fontWeight="700" fill="#2b5fb4">i</text><path d="M5 2.500h10M9 7.500h7M12 12.500h4" stroke="#555" /></Svg></C><ArrowCell className="w-[6px]" />
          <span className="w-[8px]" /><VS /><C className="ml-[7px] w-[20px]"><Indent r={false} /></C><C className="w-[22px]"><Indent r /></C>
        </div>
        <div className={row}>
          <C className="w-[22px]"><Lines xs={[[0, 14], [0, 9], [0, 14], [0, 9], [0, 14]]} /></C>
          <C className="w-[24px]"><Lines xs={[[0, 14], [3, 11], [0, 14], [3, 11], [0, 14]]} /></C>
          <C className="w-[24px]"><Lines xs={[[0, 14], [5, 14], [0, 14], [5, 14], [0, 14]]} /></C>
          <C className="h-[22px] w-[24px] rounded-[2px] border border-[#c29b29] bg-gradient-to-b from-[#f8d568] to-[#ffe07a]"><Lines xs={[[0, 14], [0, 14], [0, 14], [0, 14], [0, 14]]} /></C>
          <C className="w-[22px]"><Svg w={16} h={18}><path d="M.5 0v17M15.500 0v17" stroke="#555" /><path d="M2 3h12M4 1L2 3l2 2M12 1l2 2-2 2" stroke="#2b6fd0" /><path d="M3 7.500h10M3 10h10M3 12.500h10M3 15h10" stroke="#111" strokeWidth="1.300" /></Svg></C>
          <span className="w-[3px]" /><VS />
          <C className="ml-[8px] w-[18px]"><Svg w={16} h={17}><path d="M3 1v6M1 3.500L3 1l2 2.500M3 10v6M1 13.500L3 16l2-2.500" stroke="#2b6fd0" strokeWidth="1.400" /><path d="M7 4.500h9M7 8.500h7M7 12.500h9" stroke="#333" /></Svg></C><ArrowCell className="w-[5px]" />
        </div>
        <div className={row}>
          <C className="w-[22px]"><Svg w={17} h={16}><path d="M3 7l5-5 6 5-6 5z" fill="#e8f0fa" stroke="#447" /><path d="M14 7c2 2 1 4 0 5" stroke="#2b6fd0" strokeWidth="2" /><rect x="0" y="13" width="15" height="2.500" fill="#fff" stroke="#999" strokeWidth=".7" /></Svg></C><ArrowCell className="w-[10px]" />
          <C className="ml-[2px] w-[20px]"><Svg w={13} h={13}><path d="M.5.5h12v12H.5zM6.500 0v13M0 6.500h13" stroke="#777" strokeDasharray="1 1" /><path d="M0 12.500h13" stroke="#222" /></Svg></C><ArrowCell className="w-[10px]" />
          <span className="w-[5px]" /><VS />
          <C className="ml-[7px] w-[20px] flex-col"><Svg w={16} h={4}><path d="M1 2h5M3 0L1 2l2 2M15 2h-5M13 0l2 2-2 2" stroke="#2b6fd0" /></Svg><span className="text-[11px] leading-[11px] text-[#111]">가</span></C><ArrowCell className="w-[5px]" />
          <span className="w-[6px]" /><VS />
          <C className="ml-[7px] w-[20px]"><span className="flex flex-col text-[8px] leading-[8px] font-bold"><span className="text-[#2b5fb4]">ㄱ</span><span className="text-[#b03030]">ㅎ</span></span><Svg w={7} h={15}><path d="M3.500 0v14M1 11l2.500 3L6 11" stroke="#111" strokeWidth="1.400" /></Svg></C>
          <span className="w-[4px]" /><VS />
          <C className="ml-[9px] w-[18px]"><Svg w={12} h={14}><path d="M9.500 1v5H5M7 4L5 6l2 2M4 7v6M1 10h6M2 12l2 1" stroke="#222" strokeWidth="1.300" /></Svg></C>
        </div>
        <GroupLabel t="단락" w={23} />
      </div>

      <div className={grp + " w-[44px] items-center pt-[3px]"}>
        <C className="h-[32px] w-[30px] rounded-[3px] border border-[#c3c7cc] bg-white"><Ko className="font-bold text-[#2b5fb4]">가</Ko><Svg w={7} h={14} className="mt-[5px]"><path d="M6 1L2 10l-1 3 4-2z" fill="#e8b84a" stroke="#669" /></Svg></C>
        <Fit w={34} className="mt-[3px] text-[12px] leading-[16px]">스타일</Fit>
        <span className="mt-[5px]"><DownS /></span>
      </div>
      <div className="flex w-[44px] shrink-0 flex-col items-start pl-[7px] pt-[3px]">
        <div className="flex h-[32px] w-[36px] items-center rounded-[3px] border border-[#c3c7cc] bg-white pl-[6px]"><Svg w={16} h={14}><path d="M3 1h4v5H3zM10 1h4v5h-4zM1 6h6v7H1zM10 6h6v7h-6zM7 5h3v4H7z" fill="#3a5f9a" /></Svg></div>
        <Fit w={22} className="ml-[3px] mt-[3px] text-[12px] leading-[16px]">편집</Fit>
        <span className="ml-[13px] mt-[5px]"><DownS /></span>
      </div>
    </div>
  );
}

function Word() {
  return (
    <div className="absolute left-[1335px] top-[9px] z-10 flex h-[751px] w-[585px] flex-col overflow-hidden bg-white">
      <WordTitle />
      <WordTabs />
      <Ribbon />
      <div className="h-[7px] shrink-0 bg-gradient-to-b from-[#c8cbd1] to-[#d0d2d6]" />
      <div className="flex h-[559px] shrink-0 overflow-hidden bg-[linear-gradient(90deg,#a9a9a9_0,#d9d9d9_5px,#fff_19px)] pl-[26px]">
        <div className="-mt-[12px] flex flex-col text-black">
          {A_LINES.map(([w, t], i) => (
            <div key={i} className="flex h-[35.8px] items-center text-[12px] leading-[18px]"><Fit w={w}>{t}</Fit><EndA /></div>
          ))}
          <div className="flex h-[43px] items-center"><EndA /></div>
          {B_LINES.map(([w, t, e], i) => (
            <div key={i} className="flex h-[18.1px] shrink-0 items-center text-[15.500px] leading-[18px] [font-family:'Liberation_Serif','Noto_Sans_CJK_KR',serif]">
              {w > 0 && <Fit w={w}>{t}</Fit>}
              {e === "p" ? <EndP /> : <EndL />}
            </div>
          ))}
          <div className="flex h-[22px] items-center"><EndA /></div>
        </div>
      </div>
      <div className="flex h-[16px] shrink-0 items-center bg-[#d9dde3]">
        <Svg w={6} h={10} className="ml-[2px]"><path d="M6 0v10L0 5z" fill="#444" /></Svg>
        <C className="ml-[70px] h-[16px] w-[492px] rounded-[2px] border border-[#8f949c] bg-gradient-to-b from-[#f2f4f7] to-[#dfe3e9]">
          <div className="h-[8px] w-[8px] bg-[repeating-linear-gradient(90deg,#888_0_1px,transparent_1px_2px)]" />
        </C>
      </div>
      <div className="flex h-[24px] shrink-0 items-center border-b border-t border-[#9aa0a8] bg-gradient-to-b from-[#d5d9df] to-[#bcc1c8] text-[12px] leading-[20px] text-[#333]">
        <div className="flex w-[78px] pl-[6px]"><Fit w={62}>페이지: 1/1</Fit></div>
        <div className="h-[20px] w-px bg-[#8f949c]" />
        <div className="flex w-[86px] justify-center"><Fit w={68}>단어 수: 145</Fit></div>
        <div className="h-[20px] w-px bg-[#8f949c]" />
        <Svg w={17} h={16} className="ml-[8px]"><path d="M0 10l6-4 9 4-6 5z" fill="#e8f0fb" stroke="#46a" /><path d="M6 2l8 8M14 1L7 10" stroke="#e03020" strokeWidth="2.200" /></Svg>
        <Fit w={35} className="ml-[16px]">한국어</Fit>
        <div className="ml-[10px] h-[20px] w-px bg-[#8f949c]" />
        <Fit w={23} className="ml-[9px]">삽입</Fit>
        <div className="ml-[10px] h-[20px] w-px bg-[#8f949c]" />
        <div className="ml-[55px] h-[20px] w-px bg-[#8f949c]" />
        <C className="ml-[4px] h-[19px] w-[19px] rounded-[2px] border border-[#c29b29] bg-[#ffe07a]"><Svg w={13} h={13}><rect x=".5" y=".5" width="12" height="12" fill="#fff" stroke="#444" /><path d="M2 3.500h9M2 5.500h9M2 7.500h9M2 9.500h9" stroke="#555" /></Svg></C>
        <C className="w-[19px]"><Svg w={12} h={12}><path d="M6 2.500L1 1v9l5 1.500 5-1.500V1zM6 2.500V11M2.500 4h2M2.500 6h2M7.500 4h2M7.500 6h2" stroke="#555" fill="#eee" /></Svg></C>
        <C className="w-[18px]"><Svg w={13} h={13}><rect x=".5" y=".5" width="9" height="10" fill="#fff" stroke="#555" /><path d="M2 3h6M2 5h6" stroke="#666" /><circle cx="9" cy="9" r="3.500" fill="#3a7fc0" /><path d="M8 7l2 2-1 2" stroke="#6c4" strokeWidth="1.500" /></Svg></C>
        <C className="w-[18px]"><Svg w={11} h={12}><path d="M0 1.500h6M3 4h7M3 6.500h5M5 9h6M3 11.500h7" stroke="#666" /></Svg></C>
        <C className="w-[18px]"><Svg w={10} h={12}><path d="M0 1.500h10M0 4h10M0 6.500h10M0 9h10M0 11.500h10" stroke="#555" /></Svg></C>
        <Fit w={25} className="ml-[10px]">90%</Fit>
        <C className="ml-[7px] h-[16px] w-[16px] rounded-full border border-[#555] bg-[#f3f4f6]"><div className="h-[2px] w-[8px] bg-[#444]" /></C>
        <div className="h-px w-[41px] bg-[#777]" />
        <Svg w={10} h={13}><path d="M.5.5h8v8L4.500 12 .5 8.500z" fill="#f4f4f4" stroke="#555" /></Svg>
        <div className="h-px flex-1 bg-[#777]" />
      </div>
    </div>
  );
}

/* ------------------------------------------------------------------ */
/* Taskbar                                                             */
/* ------------------------------------------------------------------ */
function TB({ className = "", on = false, children }: { className?: string; on?: boolean; children: React.ReactNode }) {
  return (
    <div className={"flex h-[40px] shrink-0 flex-col " + className}>
      <C className="h-[38px]">{children}</C>
      {on && <div className="h-[2px] bg-[#8fc3f2]" />}
    </div>
  );
}
function Taskbar() {
  return (
    <div className="absolute left-0 top-[1040px] z-40 flex h-[40px] w-[1920px] bg-gradient-to-r from-[#072640] to-[#082a45] text-white">
      <TB className="w-[48px]"><Svg w={16} h={16} className="mt-[2px]"><path d="M0 2.300l6.500-.9v6.200H0zM7.300 1.300L16 0v7.600H7.300zM0 8.400h6.500v6.200L0 13.700zM7.300 8.400H16V16l-8.700-1.200z" fill="#fff" /></Svg></TB>
      <TB className="w-[48px]"><Svg w={17} h={17} className="mt-[2px]"><circle cx="10.500" cy="6" r="5" stroke="#fff" strokeWidth="1.400" /><path d="M7 9.500L1 16" stroke="#fff" strokeWidth="1.500" /></Svg></TB>
      <TB className="w-[48px]"><Svg w={17} h={16} className="mt-[2px]"><path d="M1 0v3M11 0v3M1 2.500h10M1 5.500h10v5H1zM1 13.500h10M1 13v3M11 13v3M14.500 0v3M14.500 8v8" stroke="#fff" strokeWidth="1.200" /><rect x="13" y="4" width="3" height="3" fill="#fff" /></Svg></TB>
      <TB className="w-[53px]">
        <Svg w={22} h={22} className="mt-[2px]"><circle cx="11" cy="11" r="11" fill="#4caf50" /><path d="M1.500 5.500L6.500 13.500 11 5.800h9.700A11 11 0 0 0 1.500 5.500z" fill="#dc4b3e" /><path d="M20.600 6H11l4.500 8L10.500 22A11 11 0 0 0 20.600 6z" fill="#fdd148" /><path d="M1.500 5.500A11 11 0 0 0 10.500 22l4.500-8-8 .5z" fill="#1a9b57" /><circle cx="11" cy="11" r="5" fill="#fff" /><circle cx="11" cy="11" r="4" fill="#4285f4" /></Svg>
      </TB>
      <TB className="ml-[3px] w-[40px]" on><Svg w={20} h={21} className="mt-[2px]"><path d="M0 9.500C1 3.500 5 0 10.500 0 16.500 0 20 4.500 20 9.500v2.700H6.500c.2 3.200 3 4.800 6 4.800 2.300 0 4.500-.7 6-1.700v4.300c-2 1-4.500 1.400-7 1.400-6 0-9.500-3.700-9.500-8.500 0-3.500 2-6.300 5-7.700-.8.900-1.300 2.200-1.400 3.200h7.700c0-2.600-1.200-4.300-4-4.300C5.500 3.700 2 6.500 0 9.500z" fill="#0a7ddc" /></Svg></TB>
      <TB className="ml-[9px] w-[40px]" on><Svg w={22} h={18} className="mt-[2px]"><path d="M0 0h8l2 2.500h11V17H0z" fill="#f7d774" /><path d="M0 4h21v13H0z" fill="#fee9a0" /><path d="M4 18v-6.500h14V18h-4v-3.500H8V18z" fill="#35b0e8" /></Svg></TB>
      <TB className="ml-[5px] w-[48px] bg-[#044f8f]" on><C className="h-[20px] w-[22px] border-2 border-[#e23a93] bg-[#2b0a1e] text-[12px] leading-[14px] font-bold text-[#e23a93]">Id</C></TB>
      <TB className="ml-[5px] w-[40px]" on><div className="mr-[2px] mt-[1px] flex h-[21px] w-[21px] items-center justify-center rounded-[2px] bg-gradient-to-br from-[#e8f0fa] to-[#a9c6ea]"><span className="text-[16px] leading-[18px] font-extrabold text-[#2059ad]">W</span></div></TB>
      <div className="flex-1" />
      <TB className="w-[22px]"><Svg w={13} h={8}><path d="M.8 7L6.500 1.300 12.200 7" stroke="#fff" strokeWidth="1.300" /></Svg></TB>
      <TB className="w-[25px]"><Svg w={17} h={14} className="mt-[2px]"><path d="M5 1.500h11v8.500H3V6M5 13h7M9 10v3" stroke="#fff" strokeWidth="1.200" /><path d="M1 1h4v4H1zM3 5v8" stroke="#fff" /></Svg></TB>
      <TB className="w-[23px]"><Svg w={15} h={13} className="mt-[2px]"><path d="M1 4.500h2L6.500 1v11L3 8.500H1z" stroke="#fff" strokeWidth="1.200" /><path d="M9 4l5 5M14 4L9 9" stroke="#fff" strokeWidth="1.200" /></Svg></TB>
      <TB className="w-[22px]"><div className="mt-[2px] flex h-[15px] w-[15px] items-center justify-center rounded-full border border-[#111] bg-[#8a949e]"><Svg w={7} h={7}><path d="M.5.5l6 6M6.500.5l-6 6" stroke="#111" strokeWidth="1.700" /></Svg></div></TB>
      <div className="ml-[6px] flex w-[68px] flex-col items-center pt-[2px] text-[12px] leading-[18px]">
        <Fit w={58}>오전 11:11</Fit>
        <Fit w={66}>2019-03-03</Fit>
      </div>
      <div className="relative ml-[19px] mt-[12px] w-[36px]">
        <Svg w={17} h={17}><path d="M0 0h16v13H9l-3 4v-4H0z" fill="#fff" /><path d="M3 3.500h10M3 6.500h10M3 9.500h7" stroke="#0a2a44" /></Svg>
        <div className="absolute left-[8px] top-[7px] flex h-[17px] w-[17px] items-center justify-center rounded-full border border-[#5d8fbd] bg-[#155086] text-[10px] leading-[12px] font-bold">2</div>
      </div>
      <div className="h-full w-px bg-[#5d7386]" />
      <div className="w-[4px]" />
    </div>
  );
}

export default function App() {
  return (
    <div className="relative h-[1080px] w-[1920px] overflow-hidden bg-[radial-gradient(ellipse_500px_300px_at_1700px_880px,#003a6b_0%,transparent_100%),radial-gradient(ellipse_300px_400px_at_1920px_820px,#00467c_0%,transparent_100%),linear-gradient(90deg,#010f22_0%,#01162e_45%,#00264b_75%,#001d3d_100%)] [font-family:'Open_Sans','Noto_Sans_CJK_KR',sans-serif]">
      {/* console window */}
      <div className="absolute left-[1200px] top-[700px] flex h-[265px] w-[443px] border border-[#1a7fd4] bg-[#060606]">
        <div className="flex-1" />
        <div className="flex w-[16px] items-end justify-center bg-[#e6e6e6] pb-[5px]"><ChevD c="#777" /></div>
      </div>
      {/* file explorer window */}
      <div className="absolute left-[1200px] top-[700px] flex h-[199px] w-[641px] items-end justify-end border-b border-r border-[#24384d] bg-white pr-[8px] shadow-[0_4px_10px_rgba(0,0,0,0.4)]">
        <C className="h-[23px] w-[22px] border border-[#3ba7d8] bg-[#cce8f6]">
          <Svg w={17} h={14}><path d="M.5.5h4v13h-4zM.5 4.800h4M.5 9.200h4" fill="#fff" stroke="#999" /><path d="M6 3h4.500M12 3h4M6 7h4.500M12 7h4M6 11h4.500M12 11h4" stroke="#777" /><path d="M2 2.500h1.300" stroke="#484" /><path d="M2 7h1.300" stroke="#48d" /><path d="M2 11.500h1.300" stroke="#d22" /></Svg>
        </C>
        <div className="mb-[7px] ml-[4px] h-[11px] w-[14px] border border-[#999] bg-gradient-to-b from-[#7fb0f0] via-[#cfe3f5] to-[#3d7a52] shadow-[inset_0_0_0_1px_#fff]" />
      </div>
      <Word />
      <InDesign />
      <Taskbar />
    </div>
  );
}
